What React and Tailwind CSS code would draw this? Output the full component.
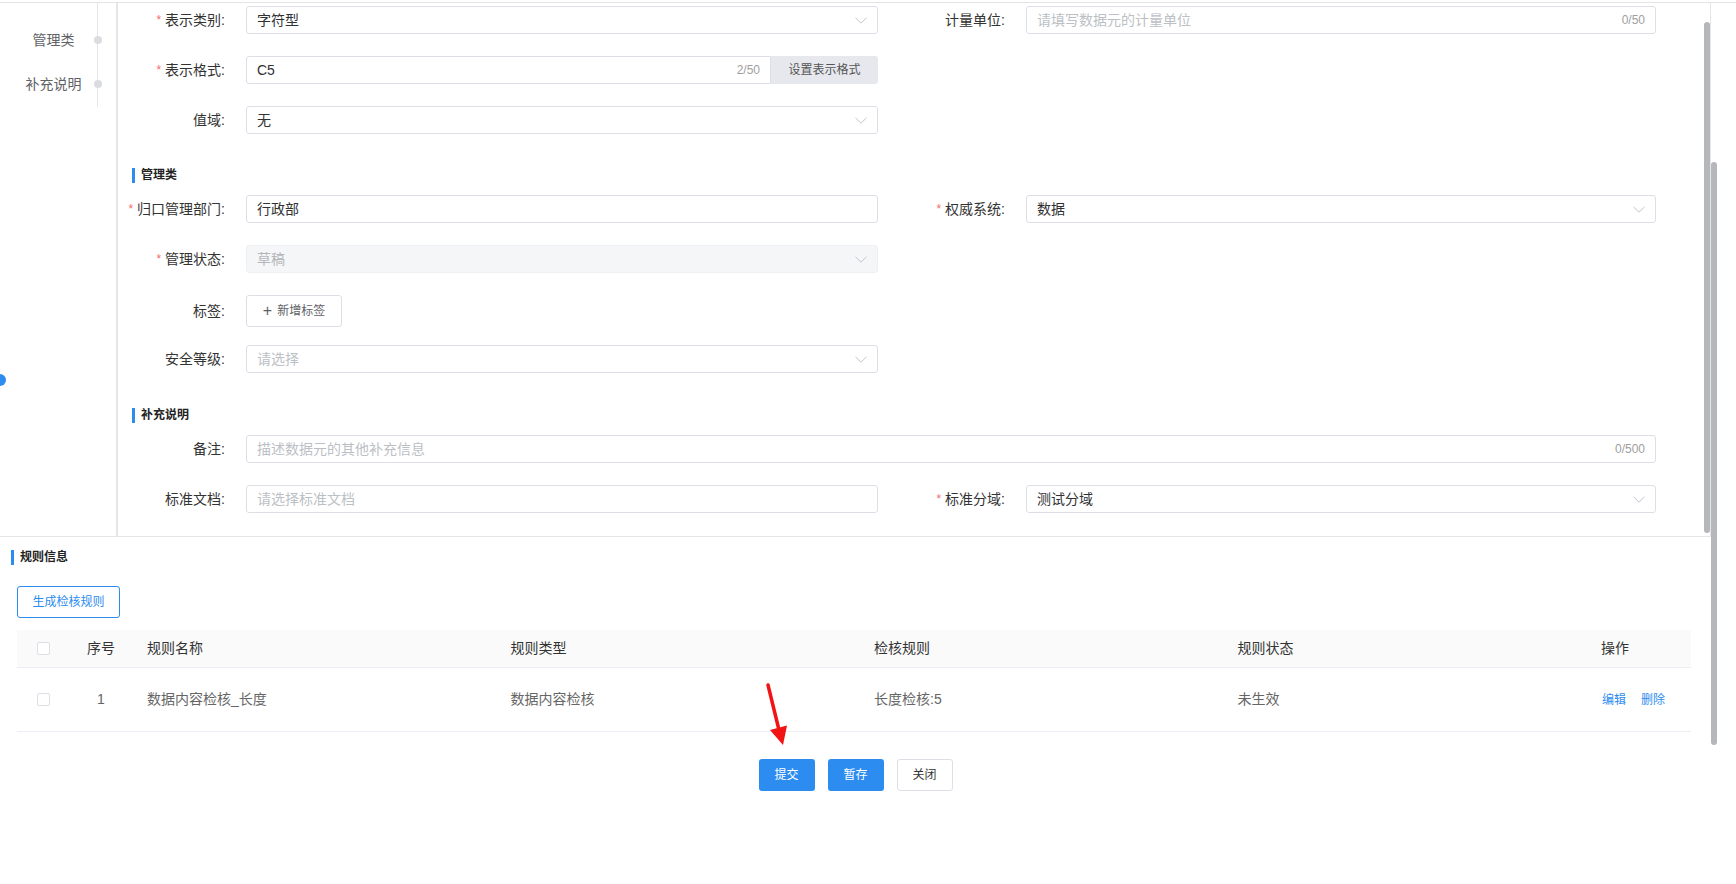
const Chevron = () => (
  <svg width="12" height="7" viewBox="0 0 12 7" className="ml-auto shrink-0">
    <path d="M0.5 0.8L6 6.2L11.5 0.8" fill="none" stroke="#c0c4cc" strokeWidth="1" />
  </svg>
)

function Label({ required, text, wide }) {
  return (
    <div className={(wide ? "w-[148px]" : "w-[128px]") + " shrink-0 flex items-center justify-end pr-[21px] text-[14px] text-[#333]"}>
      {required && <span className="mr-[4px] text-[12px] text-[#f56c6c]">*</span>}
      <span>{text}:</span>
    </div>
  )
}

function Box({ w, value, placeholder, counter, select, disabled }) {
  return (
    <div
      className={
        w +
        " h-[28px] flex items-center border rounded-[3px] pl-[10px] pr-[10px] text-[14px] " +
        (disabled ? "bg-[#f5f6f8] border-[#eef0f3] text-[#b4b6ba]" : "bg-white border-[#dcdfe6] text-[#303133]")
      }
    >
      {value ? <span>{value}</span> : <span className="text-[#bcbfc5]">{placeholder}</span>}
      {counter && <span className="ml-auto text-[12px] text-[#a0a0a0]">{counter}</span>}
      {select && <Chevron />}
    </div>
  )
}

function Section({ title, className }) {
  return (
    <div className={"flex items-center h-[20px] " + className}>
      <span className="w-[3px] h-[15px] bg-[#2d8cf0] mr-[6px]" />
      <span className="text-[12px] font-bold text-[#222]">{title}</span>
    </div>
  )
}

const Check = () => <span className="w-[13px] h-[13px] border border-[#dcdfe6] rounded-[2px] bg-white" />

export default function App() {
  return (
    <div className="relative w-[1736px] h-[884px] overflow-hidden bg-white pt-[2px] font-['Liberation_Sans','Noto_Sans_CJK_SC',sans-serif]">
      <div className="flex h-[882px] border-t border-[#e4e4e4]">
        {/* main column */}
        <div className="w-[1711px] shrink-0 flex flex-col">
          {/* upper scrolled form */}
          <div className="flex h-[534px] border-b border-r border-[#e4e6ea]">
            {/* anchor nav */}
            <div className="w-[118px] shrink-0 border-r-2 border-[#e4e6ea] flex">
              <div className="w-[97px] pl-[10px] pt-[26px] flex flex-col text-[14px] text-[#606266]">
                <div className="h-[22px] leading-[22px] text-center mb-[22px]">管理类</div>
                <div className="h-[22px] leading-[22px] text-center">补充说明</div>
              </div>
              <div className="w-px h-[104px] bg-[#e4e6ea] flex flex-col items-center pt-[33px]">
                <span className="w-[8px] h-[8px] shrink-0 rounded-full bg-[#dadcdf]" />
                <span className="w-[8px] h-[8px] shrink-0 rounded-full bg-[#dadcdf] mt-[36px]" />
              </div>
            </div>

            {/* form */}
            <div className="flex-1 pt-[3px]">
              <div className="flex h-[28px] mb-[22px]">
                <Label required text="表示类别" />
                <Box w="w-[632px]" value="字符型" select />
                <Label wide text="计量单位" />
                <Box w="w-[630px]" placeholder="请填写数据元的计量单位" counter="0/50" />
              </div>
              <div className="flex h-[28px] mb-[22px]">
                <Label required text="表示格式" />
                <div className="w-[632px] h-[28px] flex">
                  <div className="flex-1 flex items-center border border-[#dcdfe6] rounded-l-[3px] pl-[10px] pr-[10px] text-[14px] text-[#303133]">
                    <span>C5</span>
                    <span className="ml-auto text-[12px] text-[#a0a0a0]">2/50</span>
                  </div>
                  <div className="w-[107px] flex items-center justify-center bg-[#e6e8ee] rounded-r-[3px] text-[12px] text-[#555]">
                    设置表示格式
                  </div>
                </div>
              </div>
              <div className="flex h-[28px]">
                <Label text="值域" />
                <Box w="w-[632px]" value="无" select />
              </div>

              <Section title="管理类" className="pl-[14px] mt-[31px] mb-[10px]" />

              <div className="flex h-[28px] mb-[22px]">
                <Label required text="归口管理部门" />
                <Box w="w-[632px]" value="行政部" />
                <Label required wide text="权威系统" />
                <Box w="w-[630px]" value="数据" select />
              </div>
              <div className="flex h-[28px] mb-[22px]">
                <Label required text="管理状态" />
                <Box w="w-[632px]" value="草稿" select disabled />
              </div>
              <div className="flex h-[32px] mb-[18px]">
                <Label text="标签" />
                <div className="w-[96px] h-[32px] flex items-center justify-center border border-[#dcdfe6] rounded-[3px] text-[12px] text-[#606266]">
                  <span className="text-[16px] font-extralight mr-[5px] leading-none">+</span>新增标签
                </div>
              </div>
              <div className="flex h-[28px]">
                <Label text="安全等级" />
                <Box w="w-[632px]" placeholder="请选择" select />
              </div>

              <Section title="补充说明" className="pl-[14px] mt-[32px] mb-[10px]" />

              <div className="flex h-[28px] mb-[22px]">
                <Label text="备注" />
                <Box w="w-[1410px]" placeholder="描述数据元的其他补充信息" counter="0/500" />
              </div>
              <div className="flex h-[28px]">
                <Label text="标准文档" />
                <Box w="w-[632px]" placeholder="请选择标准文档" />
                <Label required wide text="标准分域" />
                <Box w="w-[630px]" value="测试分域" select />
              </div>
            </div>

            {/* inner scrollbar */}
            <div className="w-[6px] shrink-0 pt-[19px]">
              <div className="w-[6px] h-[511px] rounded-full bg-[#b6b7bb]" />
            </div>
          </div>

          {/* rules */}
          <Section title="规则信息" className="pl-[11px] mt-[10px]" />
          <div className="ml-[17px] mt-[19px] w-[103px] h-[32px] flex items-center justify-center border border-[#2d8cf0] rounded-[3px] text-[12px] text-[#2d8cf0]">
            生成检核规则
          </div>

          <div className="ml-[17px] mt-[12px] w-[1674px] text-[14px]">
            <div className="grid grid-cols-[52px_64px_1fr_1fr_1fr_1fr_104px] h-[38px] items-center bg-[#fafafa] border-b border-[#ebeef5] text-[#333]">
              <div className="flex justify-center"><Check /></div>
              <div className="text-center">序号</div>
              <div className="pl-[14px]">规则名称</div>
              <div className="pl-[14px]">规则类型</div>
              <div className="pl-[14px]">检核规则</div>
              <div className="pl-[14px]">规则状态</div>
              <div className="pl-[14px]">操作</div>
            </div>
            <div className="grid grid-cols-[52px_64px_1fr_1fr_1fr_1fr_104px] h-[64px] items-center border-b border-[#ebeef5] text-[#666]">
              <div className="flex justify-center"><Check /></div>
              <div className="text-center">1</div>
              <div className="pl-[14px]">数据内容检核_长度</div>
              <div className="pl-[14px]">数据内容检核</div>
              <div className="pl-[14px]">长度检核:5</div>
              <div className="pl-[14px]">未生效</div>
              <div className="pl-[15px] flex gap-[15px] text-[12px] text-[#2d8cf0]">
                <span>编辑</span>
                <span>删除</span>
              </div>
            </div>
          </div>

          <div className="mt-[27px] flex justify-center gap-[13px] text-[12px]">
            <div className="w-[56px] h-[32px] flex items-center justify-center rounded-[3px] bg-[#2d8cf0] text-white">提交</div>
            <div className="w-[56px] h-[32px] flex items-center justify-center rounded-[3px] bg-[#2d8cf0] text-white">暂存</div>
            <div className="w-[56px] h-[32px] flex items-center justify-center rounded-[3px] border border-[#dcdfe6] bg-white text-[#333]">关闭</div>
          </div>
        </div>

        {/* outer scrollbar */}
        <div className="flex-1 pt-[159px]">
          <div className="w-[6px] h-[583px] rounded-full bg-[#b6b7bb]" />
        </div>
      </div>

      {/* floating handle at left edge */}
      <span className="absolute left-[-6px] top-[374px] w-[12px] h-[12px] rounded-full bg-[#2d8cf0]" />

      {/* red annotation arrow */}
      <svg className="absolute left-0 top-0 pointer-events-none" width="1736" height="884">
        <line x1="768" y1="685" x2="778.5" y2="728" stroke="#f21414" strokeWidth="3.5" strokeLinecap="round" />
        <polygon points="770,730 787,725.5 783,745" fill="#f21414" />
      </svg>
    </div>
  )
}
